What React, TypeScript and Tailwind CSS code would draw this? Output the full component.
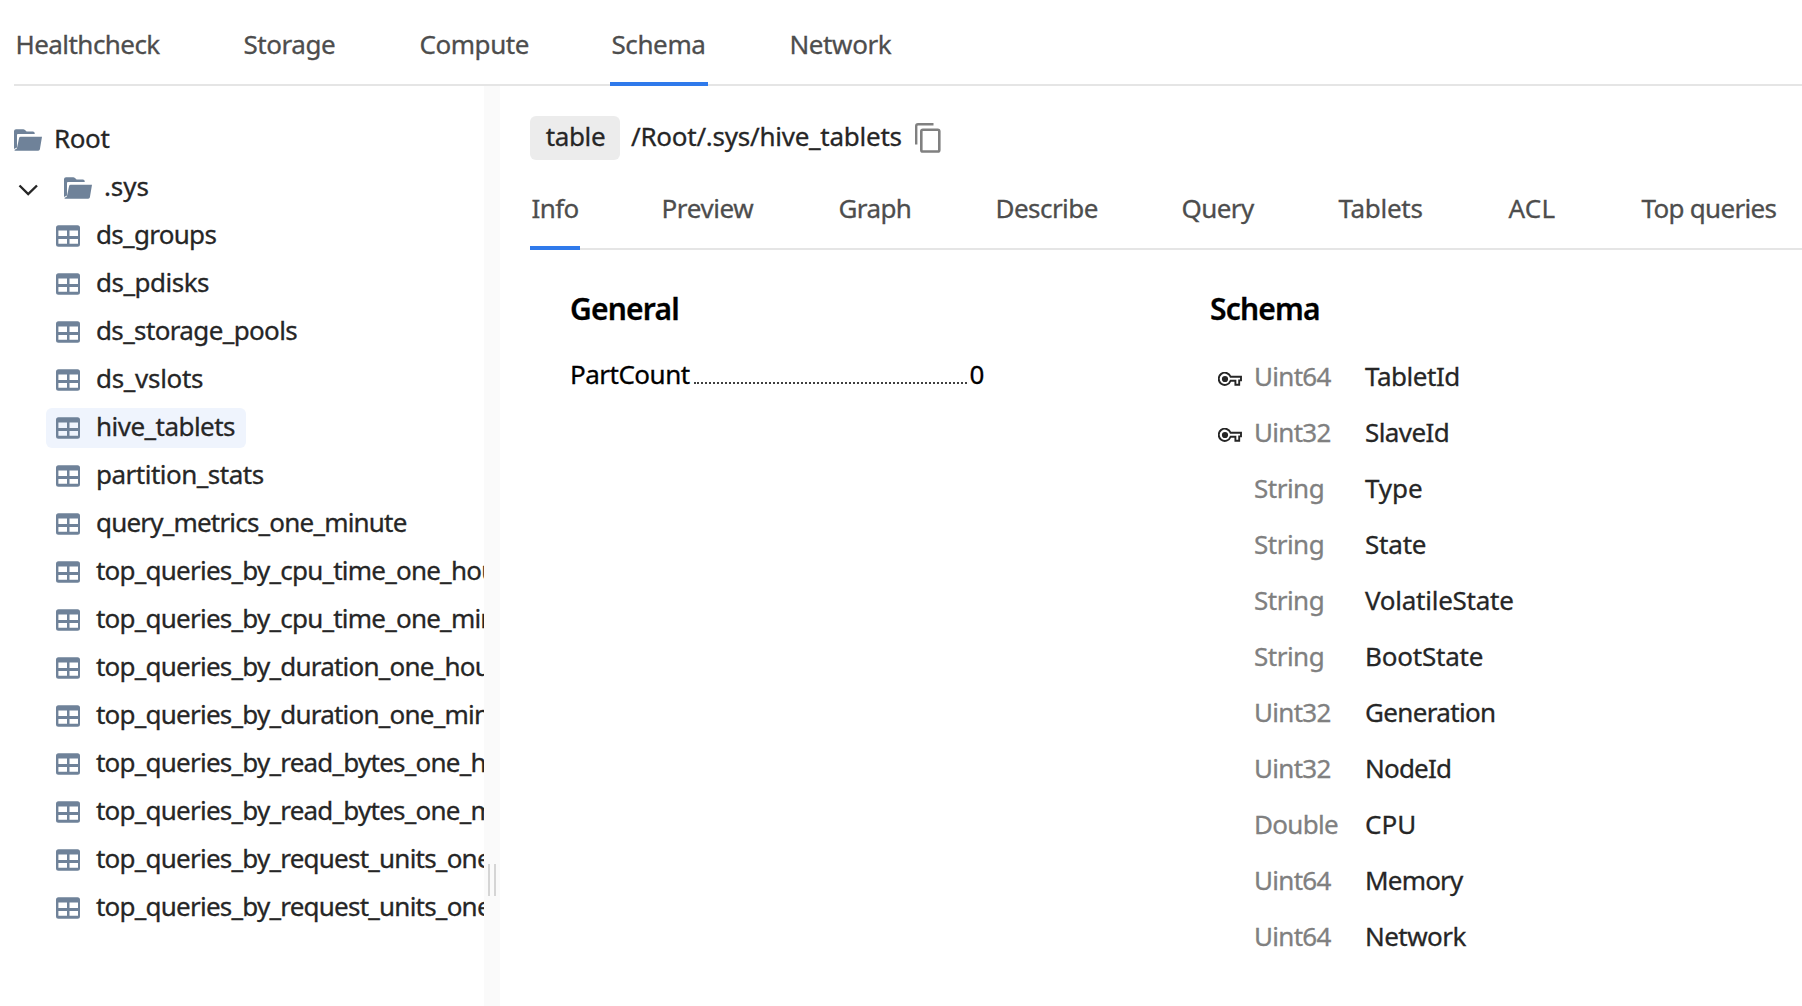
import React from "react";

const TABLE = "M2.5 0H21.5A2.5 2.5 0 0 1 24 2.5V19A2.5 2.5 0 0 1 21.5 21.5H2.5A2.5 2.5 0 0 1 0 19V2.5A2.5 2.5 0 0 1 2.5 0ZM2.4 5.3V10.7H11V5.3ZM13.5 5.3V10.7H22V5.3ZM2.4 13.6V18.4H11V13.6ZM13.5 13.6V18.4H22V13.6Z";

function TableIcon() {
  return (
    <svg className="h-[22px] w-6 shrink-0" viewBox="0 -0.3 24 22" fill="#6f8299">
      <path fillRule="evenodd" d={TABLE} />
    </svg>
  );
}

function FolderIcon() {
  return (
    <svg className="h-[22px] w-7 shrink-0" viewBox="0 0 28 22" fill="#6f8299">
      <path d="M0 2A2 2 0 0 1 2 .2H9.2Q10.2 .2 11 .9L12.6 2.4H18.9A1.8 1.8 0 0 1 20.7 4.2V5.1H3.9A1 1 0 0 0 3 5.8V18.4L0 20Z" />
      <path d="M6.6 7.8H28L25.9 20.3A1.8 1.8 0 0 1 24.2 21.8H1.8A1.7 1.7 0 0 1 .3 20.9L2.9 19.4L5.1 9Q5.4 7.8 6.6 7.8Z" />
    </svg>
  );
}

function KeyIcon() {
  return (
    <svg className="h-[14px] w-6 shrink-0" viewBox="0 0 24 14" fill="none" stroke="#262626" strokeWidth="1.9">
      <path d="M12.6 4.8H23V8.4H21.2V12.8H17.4V8.8H12.6A6.1 6.1 0 1 1 12.6 4.8Z" />
      <circle cx="7" cy="7" r="3.1" fill="#262626" stroke="none" />
    </svg>
  );
}

function CopyIcon() {
  return (
    <svg className="h-[30px] w-[26px] shrink-0" viewBox="0 0 26 30" fill="none" stroke="#808080">
      <path d="M1.2 21.5V3Q1.2 1.2 3 1.2H18.5" strokeWidth="2.4" />
      <rect x="6.3" y="6.7" width="18" height="21.8" rx="1.6" strokeWidth="2.6" />
    </svg>
  );
}

const topTabs = [
  { label: "Healthcheck", box: "w-[148px] tracking-[-0.55px]" },
  { label: "Storage", box: "w-[96px] tracking-[-0.45px]" },
  { label: "Compute", box: "w-[112px] tracking-[-0.45px]" },
  { label: "Schema", box: "w-[98px] tracking-[-0.4px]", active: true },
  { label: "Network", box: "w-[104px] tracking-[-0.4px]" },
];

const subTabs = [
  { label: "Info", box: "w-[50px] tracking-[-0.6px]", active: true },
  { label: "Preview", box: "w-[97px] tracking-[-0.4px]" },
  { label: "Graph", box: "w-[77px] tracking-[-0.6px]" },
  { label: "Describe", box: "w-[106px] tracking-[-0.55px]" },
  { label: "Query", box: "w-[77px] tracking-[-0.6px]" },
  { label: "Tablets", box: "w-[90px] tracking-[-0.3px]" },
  { label: "ACL", box: "w-[53px] tracking-[0.2px]" },
  { label: "Top queries", box: "w-[137px] tracking-[-0.7px]" },
];

const tables = [
  { name: "ds_groups", t: "tracking-[-0.7px]" },
  { name: "ds_pdisks", t: "tracking-[-0.5px]" },
  { name: "ds_storage_pools", t: "tracking-[-0.63px]" },
  { name: "ds_vslots", t: "tracking-[-0.3px]" },
  { name: "hive_tablets", t: "tracking-[-0.53px]", selected: true },
  { name: "partition_stats", t: "tracking-[-0.5px]" },
  { name: "query_metrics_one_minute", t: "tracking-[-0.8px]" },
  { name: "top_queries_by_cpu_time_one_hour", t: "tracking-[-0.77px]" },
  { name: "top_queries_by_cpu_time_one_minute", t: "tracking-[-0.77px]" },
  { name: "top_queries_by_duration_one_hour", t: "tracking-[-0.77px]" },
  { name: "top_queries_by_duration_one_minute", t: "tracking-[-0.77px]" },
  { name: "top_queries_by_read_bytes_one_hour", t: "tracking-[-0.77px]" },
  { name: "top_queries_by_read_bytes_one_minute", t: "tracking-[-0.77px]" },
  { name: "top_queries_by_request_units_one_hour", t: "tracking-[-0.77px]" },
  { name: "top_queries_by_request_units_one_minute", t: "tracking-[-0.77px]" },
];

const columns = [
  { type: "Uint64", name: "TabletId", pk: true, a: "tracking-[-0.7px]", b: "tracking-[-0.45px]" },
  { type: "Uint32", name: "SlaveId", pk: true, a: "tracking-[-0.7px]", b: "tracking-[-0.6px]" },
  { type: "String", name: "Type", a: "tracking-[-0.5px]", b: "tracking-[-0.1px]" },
  { type: "String", name: "State", a: "tracking-[-0.5px]", b: "tracking-[-0.2px]" },
  { type: "String", name: "VolatileState", a: "tracking-[-0.5px]", b: "tracking-[-0.25px]" },
  { type: "String", name: "BootState", a: "tracking-[-0.5px]", b: "tracking-[-0.2px]" },
  { type: "Uint32", name: "Generation", a: "tracking-[-0.7px]", b: "tracking-[-0.65px]" },
  { type: "Uint32", name: "NodeId", a: "tracking-[-0.7px]", b: "tracking-[-0.8px]" },
  { type: "Double", name: "CPU", a: "tracking-[-0.7px]", b: "tracking-[0.1px]" },
  { type: "Uint64", name: "Memory", a: "tracking-[-0.7px]", b: "tracking-[-0.8px]" },
  { type: "Uint64", name: "Network", a: "tracking-[-0.7px]", b: "tracking-[-0.55px]" },
];

type Tab = { label: string; box: string; active?: boolean };

function Tabs({ items, className }: { items: Tab[]; className: string }) {
  return (
    <nav className={"flex shrink-0 gap-20 text-[#4d4d4d] shadow-[inset_0_-2px_0_#e5e5e5] " + className}>
      {items.map((tab) => (
        <button
          key={tab.label}
          className={
            "flex shrink-0 items-start whitespace-nowrap border-b-4 pl-[1.5px] text-left leading-9 " +
            (tab.active ? "border-[#2f7aeb] " : "border-transparent ") +
            tab.box
          }
        >
          {tab.label}
        </button>
      ))}
    </nav>
  );
}

function Tree() {
  return (
    <aside className="w-[484px] shrink-0 overflow-hidden whitespace-nowrap pt-[30px] leading-[44px]">
      <div className="flex h-12 items-start pl-[14px]">
        <span className="mt-[13px] flex"><FolderIcon /></span>
        <span className="ml-3 tracking-[-0.4px]">Root</span>
      </div>
      <div className="flex h-12 items-start pl-[18px]">
        <svg className="mt-5 h-3 w-5 shrink-0" viewBox="0 0 20 12" fill="none" stroke="#262626" strokeWidth="2.4">
          <path d="M1.5 1.5L10.2 10L19 1.5" />
        </svg>
        <span className="ml-[26px] mt-[13px] flex"><FolderIcon /></span>
        <span className="ml-3 tracking-[-0.1px]">.sys</span>
      </div>
      {tables.map((row) => (
        <div key={row.name} className="flex h-12 pl-[46px] pt-1">
          <div
            className={
              "flex h-10 shrink-0 rounded-md pl-[10px] " + (row.selected ? "w-[200px] bg-[#eff4fd]" : "")
            }
          >
            <span className="mt-[9px] flex"><TableIcon /></span>
            <span className={"-mt-1 ml-4 " + row.t}>{row.name}</span>
          </div>
        </div>
      ))}
    </aside>
  );
}

export default function App() {
  return (
    <div className="flex h-[1006px] w-[1802px] flex-col overflow-hidden bg-white font-['Noto_Sans',sans-serif] text-[26px] text-[#262626] [-webkit-text-stroke:0.3px]">
      <Tabs items={topTabs} className="ml-[14px] h-[86px] pt-[26px]" />
      <div className="flex min-h-0 flex-1">
        <Tree />
        <div className="flex w-4 shrink-0 justify-center gap-1 bg-[#fafafa] pt-[778px]">
          <div className="h-8 w-0.5 bg-[#d5d5d5]" />
          <div className="h-8 w-0.5 bg-[#d5d5d5]" />
        </div>
        <main className="min-w-0 flex-1 overflow-hidden pl-[30px] pt-[30px]">
          <div className="flex h-11 items-start whitespace-nowrap leading-10">
            <span className="h-11 w-[90px] rounded-md bg-[#ececec] pl-px text-center tracking-[-0.4px]">table</span>
            <span className="ml-[11px] w-[274px] tracking-[-0.25px]">/Root/.sys/hive_tablets</span>
            <span className="ml-[10px] mt-[7px] flex"><CopyIcon /></span>
          </div>
          <Tabs items={subTabs} className="h-[90px] pt-[30px]" />
          <div className="flex pl-10 pt-[39px]">
            <section className="w-[640px]">
              <h2 className="text-[30px] font-semibold leading-10 tracking-[-0.8px] text-black">General</h2>
              <div className="mt-[27px] flex w-[414px] leading-9 text-black">
                <span className="tracking-[-0.5px]">PartCount</span>
                <span className="ml-1 mr-[3px] h-7 flex-1 border-b-2 border-dotted border-[#404040]" />
                <span className="tracking-[-0.4px]">0</span>
              </div>
            </section>
            <section>
              <h2 className="text-[30px] font-semibold leading-10 tracking-[-0.8px] text-black">Schema</h2>
              <div className="mt-[19px]">
                {columns.map((col) => (
                  <div key={col.name} className="flex h-14 items-start pl-2 leading-[56px]">
                    <span className="mt-6 flex w-9">{col.pk && <KeyIcon />}</span>
                    <span className={"w-[111px] text-[#808080] " + col.a}>{col.type}</span>
                    <span className={col.b}>{col.name}</span>
                  </div>
                ))}
              </div>
            </section>
          </div>
        </main>
      </div>
    </div>
  );
}
